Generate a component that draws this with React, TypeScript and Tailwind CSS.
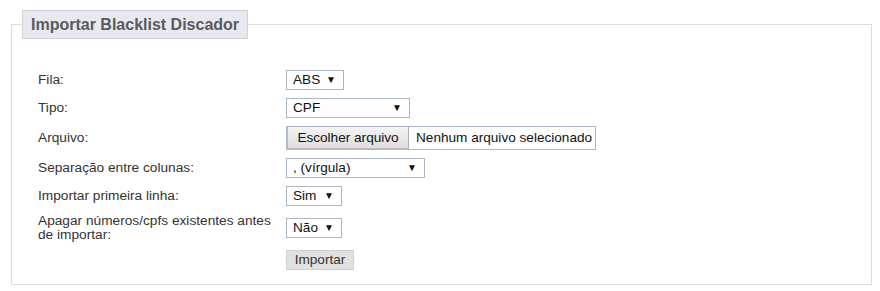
const font = "font-['Liberation_Sans',Arial,sans-serif]";

function FakeSelect({ value, width }: { value: string; width: string }) {
    return (
        <div className={`${width} h-[20px] flex items-center justify-between bg-white border border-[#a9b6c6] pl-[6px] pr-[7px] text-[13.6px] text-[#111]`}>
            <span className="whitespace-nowrap">{value}</span>
            <span className="text-[10px] leading-none">▼</span>
        </div>
    );
}

function FileInput() {
    return (
        <div className="w-[310px] h-[24px] flex items-stretch bg-white border border-[#a9b6c6] text-[13.6px] text-[#111]">
            <div className="w-[122px] flex items-center justify-center bg-gradient-to-b from-[#f4f4f4] to-[#dedede] border-r border-[#adadad] border-l border-b border-l-[#bdbdbd] border-b-[#bdbdbd]">
                Escolher arquivo
            </div>
            <span className="flex items-center pl-[7px] whitespace-nowrap">Nenhum arquivo selecionado</span>
        </div>
    );
}

const rows: { label: React.ReactNode; control: React.ReactNode }[] = [
    { label: 'Fila:', control: <FakeSelect value="ABS" width="w-[58px]" /> },
    { label: 'Tipo:', control: <FakeSelect value="CPF" width="w-[124px]" /> },
    { label: 'Arquivo:', control: <FileInput /> },
    { label: 'Separação entre colunas:', control: <FakeSelect value=", (vírgula)" width="w-[139px]" /> },
    { label: 'Importar primeira linha:', control: <FakeSelect value="Sim" width="w-[56px]" /> },
    {
        label: (
            <>
                Apagar números/cpfs existentes antes
                <br />
                de importar:
            </>
        ),
        control: <FakeSelect value="Não" width="w-[56px]" />,
    },
];

export default function App() {
    return (
        <div className={`w-[880px] h-[291px] bg-white ${font} pt-[10px] pl-[11px] pr-[8px]`}>
            <fieldset className="border border-[#dcdcdc] px-[10px] pb-[14px]">
                <legend className="border border-[#cfd2d8] bg-[#e8e9ee] px-[8px] py-[5px] text-[16px] leading-[17px] font-bold text-[#5a5a5f]">
                    Importar Blacklist Discador
                </legend>
                <div className="pl-[16px] pt-[31px] grid grid-cols-[248px_1fr] gap-y-[8px] items-center text-[13.7px] leading-[14px] text-[#333]">
                    {rows.map((row, i) => (
                        <div key={i} className="contents">
                            <div className="whitespace-nowrap">{row.label}</div>
                            <div>{row.control}</div>
                        </div>
                    ))}
                    <div />
                    <div>
                        <button className="w-[68px] h-[20px] bg-[#e1e1e1] border border-[#cfcfcf] text-[13.6px] leading-none text-[#333]">
                            Importar
                        </button>
                    </div>
                </div>
            </fieldset>
        </div>
    );
}
